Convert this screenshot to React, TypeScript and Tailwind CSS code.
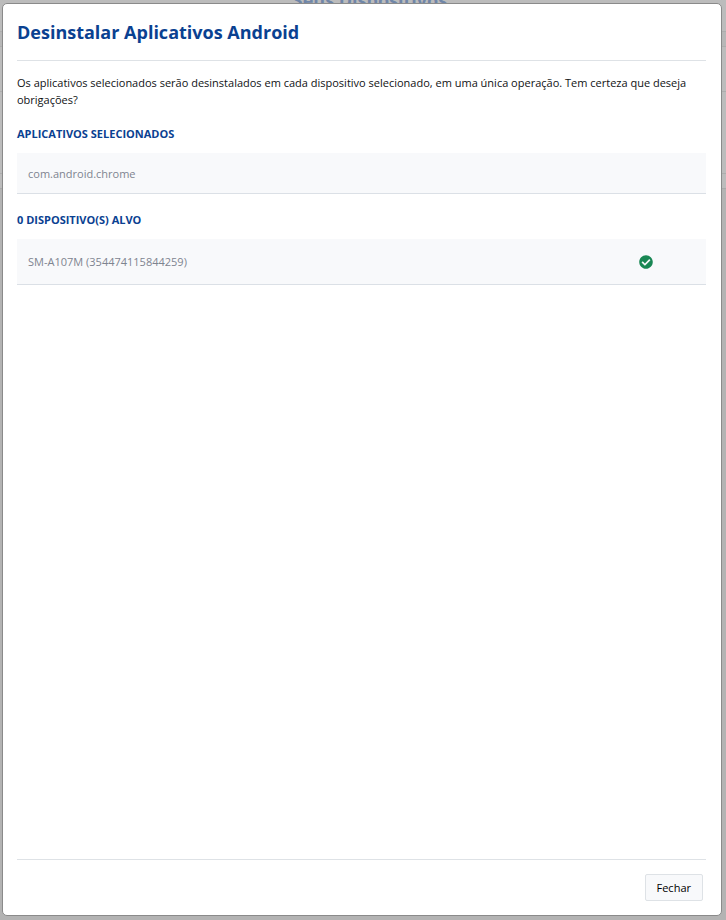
import { FaCheckCircle } from 'react-icons/fa';

const apps = ['com.android.chrome'];

const devices = [{ name: 'SM-A107M', imei: '354474115844259', done: true }];

function DevicesPage() {
  return (
    <div aria-hidden="true" className="absolute inset-0 overflow-hidden bg-[#b3b3b3]">
      <div className="h-[189px] border-b border-[#a9a9a9] bg-[#bcbcbc]">
        <div className="flex h-8 justify-center border-b border-[#adadad] pl-[14px]">
          <h1 className="-mt-3 text-lg leading-6 font-bold text-[#7086a8]">Seus Dispositivos</h1>
        </div>
        <div className="h-[15px] border-b border-[#adadad] bg-[#b7b7b7]"></div>
        <div className="h-[45px] border-b border-[#adadad]"></div>
        <div className="h-[82px] border-b border-[#adadad]"></div>
      </div>
    </div>
  );
}

export default function App() {
  return (
    <div className="relative flex min-h-screen font-['Open_Sans',sans-serif] text-[11px] leading-[17px] text-[#101214]">
      <DevicesPage />

      {/* Modal */}
      <div className="relative flex flex-1 pt-[3px] pr-1 pb-1 pl-[2px]">
        <div
          role="dialog"
          aria-labelledby="modal-title"
          className="flex flex-1 flex-col rounded-[5px] border border-[#8a8a8a] bg-white pr-[15px] pl-[14px]"
        >
          <header className="border-b border-[#dee2e6] pt-4 pb-4">
            <h2 id="modal-title" className="text-lg leading-6 font-bold text-[#0a4191]">
              Desinstalar Aplicativos Android
            </h2>
          </header>

          <main className="flex-1 pt-[13px]">
            <p>
              Os aplicativos selecionados serão desinstalados em cada dispositivo selecionado, em uma única operação. Tem
              certeza que deseja obrigações?
            </p>

            <h3 className="mt-[17px] font-bold text-[#0a4191] uppercase">Aplicativos selecionados</h3>
            <ul className="mt-[11px]">
              {apps.map((app) => (
                <li key={app} className="border-b border-[#dbe0e6] bg-[#f8f9fb] px-[11px] pt-3 pb-[11px] text-[#7e8490]">
                  {app}
                </li>
              ))}
            </ul>

            <h3 className="mt-[17px] font-bold text-[#0a4191] uppercase">0 dispositivo(s) alvo</h3>
            <ul className="mt-[11px]">
              {devices.map((device) => (
                <li
                  key={device.imei}
                  className="flex items-center justify-between border-b border-[#dbe0e6] bg-[#f8f9fb] py-[14px] pr-[53px] pl-[11px] text-[#7e8490]"
                >
                  <span>
                    {device.name} ({device.imei})
                  </span>
                  {device.done && <FaCheckCircle className="h-[14px] w-[14px] text-[#198754]" />}
                </li>
              ))}
            </ul>
          </main>

          <footer className="flex justify-end border-t border-[#dee2e6] pt-[14px] pr-[3px] pb-[14px]">
            <button
              type="button"
              className="rounded-[2px] border border-[#dee2e6] bg-[#f8f9fb] px-[11px] py-1 text-black"
            >
              Fechar
            </button>
          </footer>
        </div>
      </div>
    </div>
  );
}
